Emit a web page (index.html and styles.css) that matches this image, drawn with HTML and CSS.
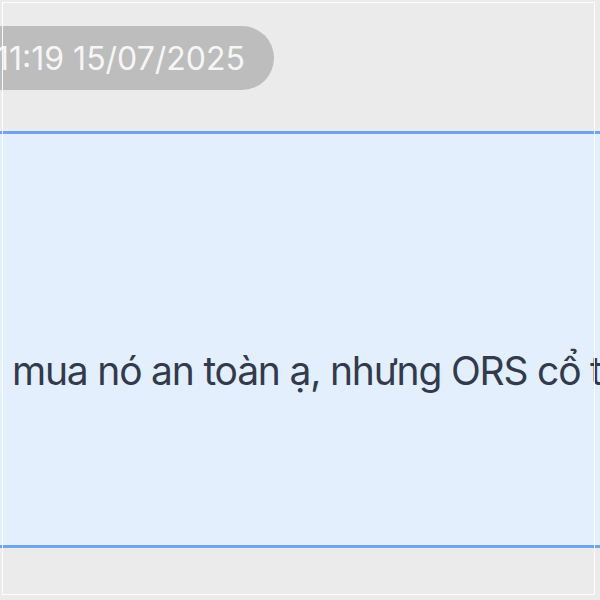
FILE: index.html
```html
<!DOCTYPE html>
<html lang="vi">
<head>
<meta charset="utf-8">
<link rel="stylesheet" href="styles.css">
</head>
<body>
<div class="screen">
  <div class="time-row"><span class="time-pill">11:19 15/07/2025</span></div>
  <div class="bubble">
    <p class="msg">mua nó an toàn ạ, nhưng ORS cổ truyền vẫn tốt hơn</p>
  </div>
  <div class="frame"></div>
</div>
</body>
</html>
```
FILE: styles.css
```css
html, body {
  margin: 0;
  padding: 0;
  width: 600px;
  height: 600px;
  overflow: hidden;
  background: #ebebec;
}
.screen {
  position: relative;
  width: 600px;
  height: 600px;
  padding-top: 26px;
  box-sizing: border-box;
  font-family: Inter, "Noto Sans", sans-serif;
}
.time-row {
  display: flex;
  height: 64px;
}
.time-pill {
  display: flex;
  align-items: center;
  margin-left: -40px;
  padding: 0 29px 0 36px;
  height: 64px;
  border-radius: 32px;
  background: #bdbdbe;
  color: #f6f6f6;
  font-size: 32px;
  letter-spacing: 0;
}
.bubble {
  margin-top: 41px;
  height: 411px;
  background: #e3effd;
  border-top: 3px solid #70a5ee;
  border-bottom: 3px solid #70a5ee;
  display: flex;
  align-items: flex-start;
}
.msg {
  margin: 213px 0 0 12px;
  white-space: nowrap;
  font-size: 39px;
  letter-spacing: -1.2px;
  line-height: 48px;
  color: #323a4c;
}
.frame {
  position: absolute;
  left: 2px;
  top: 2px;
  right: 5px;
  bottom: 5px;
  border: 1px solid rgba(255,255,255,0.9);
  pointer-events: none;
}
```
